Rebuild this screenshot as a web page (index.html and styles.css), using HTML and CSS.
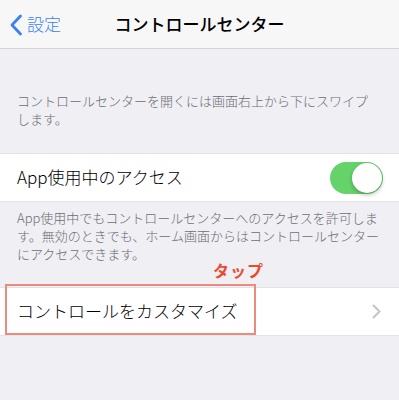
FILE: index.html
```html
<!DOCTYPE html>
<html lang="ja">
<head>
<meta charset="utf-8">
<link rel="stylesheet" href="styles.css">
</head>
<body>
<header class="nav">
  <a class="back">
    <svg class="back-chevron" width="14" height="22" viewBox="0 0 14 22"><path d="M11.5 2 L3 11 L11.5 20" fill="none" stroke="#3a82f7" stroke-width="2.8" stroke-linecap="round" stroke-linejoin="round"/></svg>
    <span class="back-label">設定</span>
  </a>
  <h1 class="title">コントロールセンター</h1>
  <span class="nav-spacer"></span>
</header>
<main class="content">
  <p class="desc desc-top">コントロールセンターを開くには画面右上から下にスワイプ<br>します。</p>
  <div class="row">
    <span class="row-label">App使用中のアクセス</span>
    <span class="toggle"><span class="knob"></span></span>
  </div>
  <p class="desc desc-foot">App使用中でもコントロールセンターへのアクセスを許可しま<br>す。無効のときでも、ホーム画面からはコントロールセンター<br>にアクセスできます。</p>
  <div class="tap-label">タップ</div>
  <div class="row row-link">
    <span class="row-label">コントロールをカスタマイズ</span>
    <svg class="chevron" width="9" height="15" viewBox="0 0 9 15"><path d="M1.5 1.5 L7.5 7.5 L1.5 13.5" fill="none" stroke="#c4c4c9" stroke-width="2" stroke-linecap="round" stroke-linejoin="round"/></svg>
    <span class="highlight"></span>
  </div>
</main>
</body>
</html>
```

FILE: styles.css
```css
html, body {
  margin: 0;
  padding: 0;
}
body {
  width: 399px;
  height: 400px;
  overflow: hidden;
  background: #efeff4;
  font-family: "Noto Sans CJK JP", "Noto Sans", sans-serif;
  color: #000;
}
.nav {
  height: 48px;
  background: #f7f7f8;
  border-bottom: 1px solid #d3d3d7;
  display: grid;
  grid-template-columns: 1fr auto 1fr;
  align-items: center;
}
.back {
  display: flex;
  align-items: center;
  gap: 4px;
  padding-left: 9px;
  color: #3a82f7;
  font-size: 17px;
  font-weight: 300;
}
.back-chevron {
  display: block;
  margin-top: 1px;
}
.back-label {
  line-height: 20px;
}
.title {
  margin: 0;
  font-size: 17px;
  font-weight: 500;
  line-height: 20px;
  letter-spacing: 0;
}
.content {
  display: flex;
  flex-direction: column;
}
.desc {
  margin: 0;
  padding: 0 16px 0 17px;
  font-size: 13px;
  font-weight: 300;
  line-height: 18px;
  color: #6d6d72;
}
.desc-top {
  padding-top: 43px;
  padding-bottom: 25px;
}
.desc-foot {
  padding-top: 7px;
}
.row {
  position: relative;
  height: 47px;
  background: #fff;
  border-top: 1px solid #e3e3e7;
  border-bottom: 1px solid #e3e3e7;
  display: flex;
  align-items: center;
  justify-content: space-between;
  padding: 0 16px 0 17px;
}
.row-label {
  font-size: 17px;
  font-weight: 300;
  line-height: 20px;
  margin-top: -2px;
}
.toggle {
  position: relative;
  width: 53px;
  height: 32px;
  border-radius: 16px;
  background: #65d36a;
}
.knob {
  position: absolute;
  right: 1px;
  top: 1px;
  width: 30px;
  height: 30px;
  border-radius: 50%;
  background: #fff;
  box-shadow: 0 2px 4px rgba(0,0,0,0.25), 0 0 1px rgba(0,0,0,0.15);
}
.tap-label {
  padding-left: 213px;
  height: 14px;
  margin-bottom: 10px;
  line-height: 14px;
  font-size: 16px;
  font-weight: 700;
  color: #ea4b30;
  letter-spacing: 1px;
}
.chevron {
  display: block;
  margin-right: 2px;
}
.highlight {
  position: absolute;
  left: 5px;
  top: -4px;
  width: 247px;
  height: 47px;
  border: 2px solid #eb8b7b;
}
```
